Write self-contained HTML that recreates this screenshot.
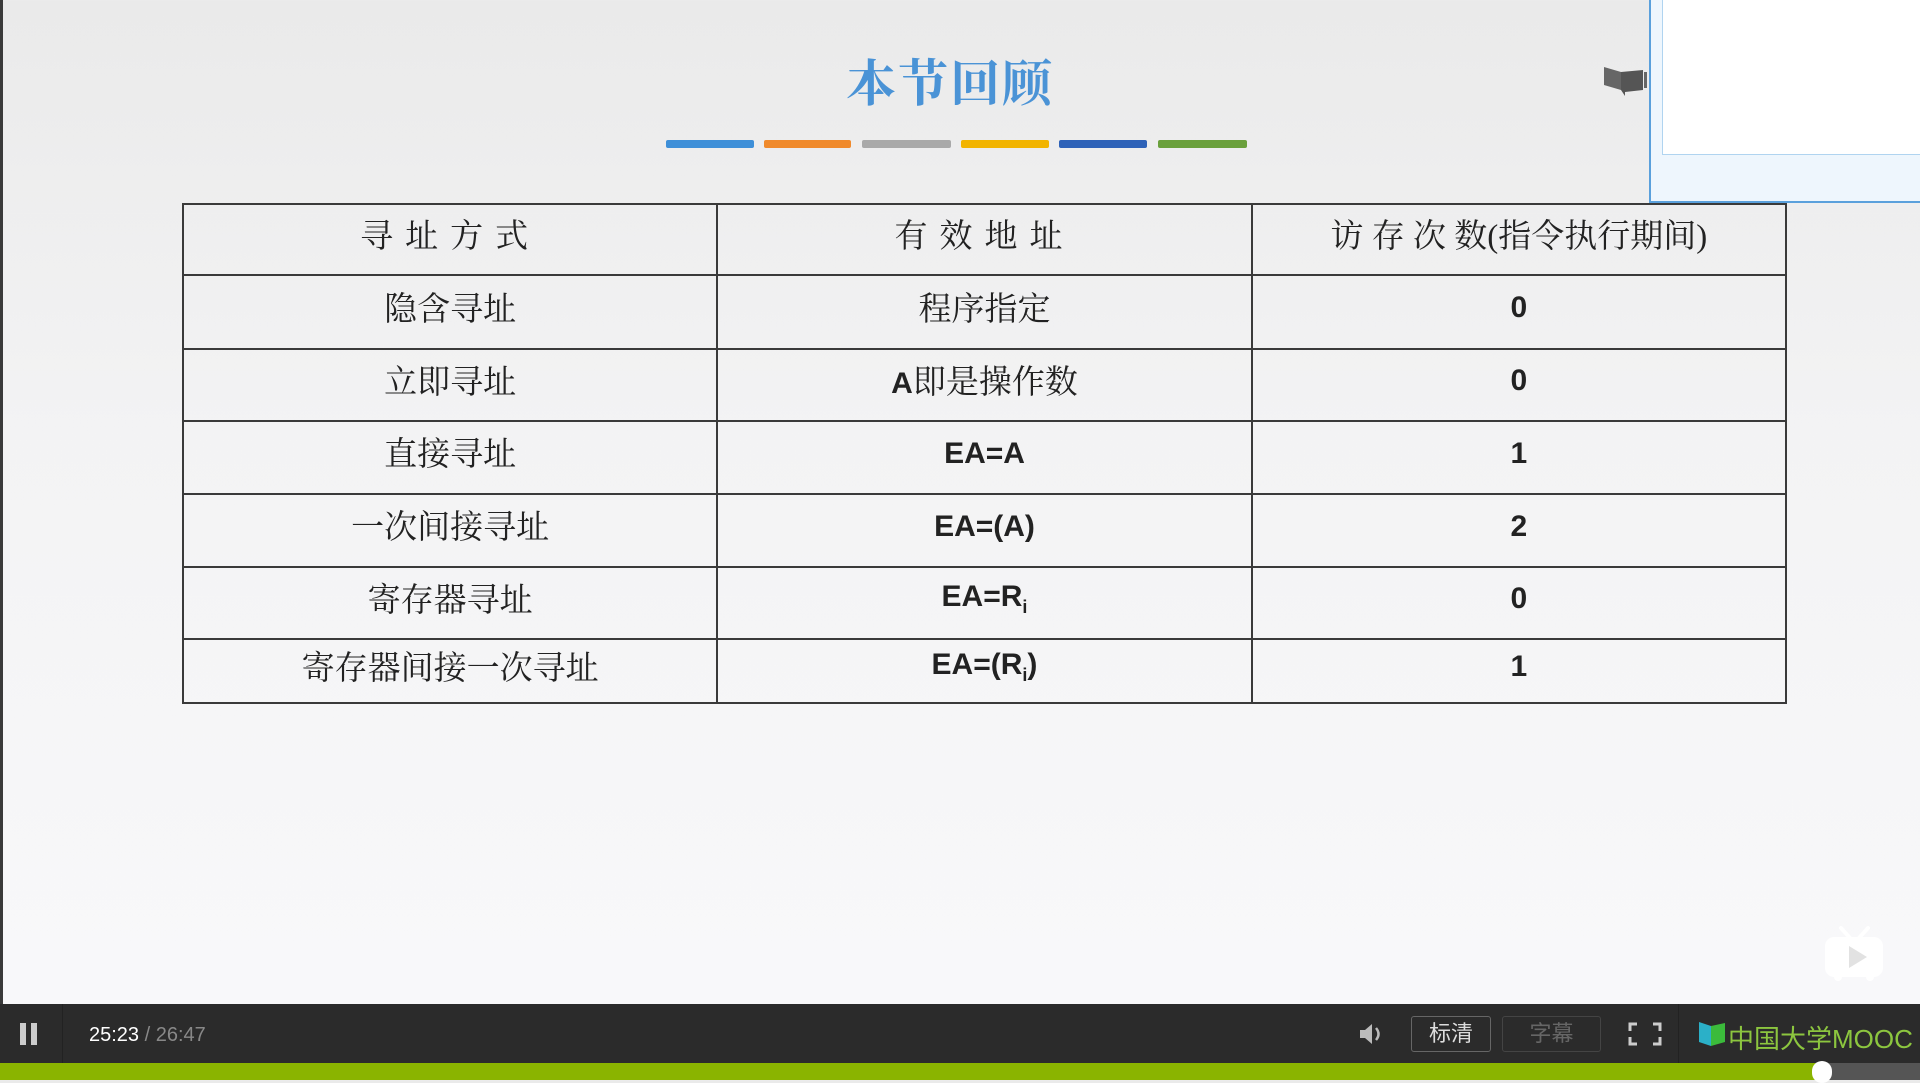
<!DOCTYPE html>
<html><head><meta charset="utf-8"><style>
*{margin:0;padding:0;box-sizing:border-box}
body{width:1920px;height:1080px;overflow:hidden;position:relative;background:linear-gradient(#eaeaea 0%,#f3f3f4 40%,#f9f9fb 100%);font-family:"Liberation Serif","Noto Serif CJK SC",serif}
.leftb{position:absolute;left:0;top:0;width:3px;height:1004px;background:#3a3a3a}
.title{position:absolute;left:0;width:1900px;top:44px;text-align:center;font-size:50px;color:#4a93d6;font-weight:bold;font-family:"Liberation Serif","Noto Serif CJK SC",serif;letter-spacing:2px}
.bar{position:absolute;top:140px;height:8px;border-radius:2px}
table{position:absolute;left:182px;top:203px;width:1605px;height:499px;border-collapse:collapse}
td{border:2.5px solid #3a3a3a;text-align:center;font-size:33px;color:#222;width:535px;padding-bottom:12px;font-weight:normal}
.s{font-family:"Liberation Sans","Noto Sans CJK SC",sans-serif;font-size:30px;color:#222;font-weight:bold;padding-bottom:8px}
.pop{position:absolute;left:1649px;top:0;width:271px;height:203px;background:#eef6fd;border-left:2px solid #5aa0dc;border-bottom:2px solid #5aa0dc}
.pop div{position:absolute;left:11px;top:0;right:0;height:155px;background:#fff;border-left:1px solid #b0d4f0;border-bottom:1px solid #b0d4f0}
.ctrl{position:absolute;left:0;top:1004px;width:1920px;height:59px;background:#2b2b2b;color:#ddd;font-family:"Liberation Sans","Noto Sans CJK SC",sans-serif}
.prog{position:absolute;left:0;top:1063px;width:1920px;height:17px;background:#8ab400}
.prog span{position:absolute;left:1822px;top:0;width:98px;height:17px;background:#555}
.knob{position:absolute;left:1812px;top:1061px;width:20px;height:22px;border-radius:10px;background:#fff}
.btn{position:absolute;top:12px;height:36px;border:1.5px solid #555;border-radius:3px;font-size:22px;text-align:center;line-height:34px}
</style></head><body>
<div class="leftb"></div>
<div class="title">本节回顾</div>
<div class="bar" style="left:666px;width:88px;background:#3e8fd8"></div>
<div class="bar" style="left:764px;width:87px;background:#f08a2c"></div>
<div class="bar" style="left:862px;width:89px;background:#a9a9a9"></div>
<div class="bar" style="left:961px;width:88px;background:#f2b400"></div>
<div class="bar" style="left:1059px;width:88px;background:#2e62b8"></div>
<div class="bar" style="left:1158px;width:89px;background:#6aa03c"></div>
<table>
<tr style="height:71px"><td style="letter-spacing:12px">寻址方式</td><td style="letter-spacing:12px">有效地址</td><td>访 存 次 数(指令执行期间)</td></tr>
<tr style="height:74px"><td>隐含寻址</td><td>程序指定</td><td class="s">0</td></tr>
<tr style="height:72px"><td>立即寻址</td><td><span class="s" style="padding:0">A</span>即是操作数</td><td class="s">0</td></tr>
<tr style="height:73px"><td>直接寻址</td><td class="s">EA=A</td><td class="s">1</td></tr>
<tr style="height:73px"><td>一次间接寻址</td><td class="s">EA=(A)</td><td class="s">2</td></tr>
<tr style="height:72px"><td>寄存器寻址</td><td class="s">EA=R<sub style="font-size:18px">i</sub></td><td class="s">0</td></tr>
<tr style="height:64px"><td>寄存器间接一次寻址</td><td class="s">EA=(R<sub style="font-size:18px">i</sub>)</td><td class="s">1</td></tr>
</table>
<svg style="position:absolute;left:1603px;top:64px" width="44" height="34"><path d="M1 3 L18 8 L18 26 L1 21Z" fill="#666"/><path d="M18 8 L40 6 L40 26 L22 28 L22 32 L18 26Z" fill="#555"/><rect x="41" y="8" width="3" height="16" fill="#666"/></svg>
<div class="pop"><div></div></div>
<svg style="position:absolute;left:1823px;top:925px" width="62" height="58"><path d="M18 3 L27 13 M45 3 L36 13" stroke="#fff" stroke-width="4" stroke-linecap="round"/><rect x="2" y="12" width="58" height="40" rx="9" fill="#fff"/><circle cx="15" cy="52" r="4" fill="#fff"/><circle cx="47" cy="52" r="4" fill="#fff"/><path d="M26 21 L26 43 L44 32Z" fill="#e2e2e2"/></svg>
<div class="ctrl">
<div style="position:absolute;left:20px;top:19px;width:6px;height:22px;background:#ccc"></div>
<div style="position:absolute;left:31px;top:19px;width:6px;height:22px;background:#ccc"></div>
<div style="position:absolute;left:62px;top:0;width:1px;height:59px;background:#222"></div>
<div style="position:absolute;left:89px;top:20px;font-size:20px;color:#fff">25:23 <span style="color:#888">/ 26:47</span></div>
<svg style="position:absolute;left:1358px;top:18px" width="28" height="24"><path d="M2 8 H7 L14 2 V22 L7 16 H2Z" fill="#bbb"/><path d="M18 6 Q23 12 18 18" stroke="#bbb" stroke-width="2.5" fill="none"/></svg>
<div class="btn" style="left:1411px;width:80px;color:#ddd;border-color:#666">标清</div>
<div class="btn" style="left:1502px;width:99px;color:#666;border-color:#444">字幕</div>
<svg style="position:absolute;left:1628px;top:18px" width="34" height="24"><path d="M2 9 V2 H9 M25 2 H32 V9 M32 15 V22 H25 M9 22 H2 V15" stroke="#ccc" stroke-width="3" fill="none"/></svg>
<div style="position:absolute;left:1678px;top:0;width:1px;height:59px;background:#222"></div>
<svg style="position:absolute;left:1697px;top:16px" width="30" height="30"><path d="M2 2 L14 6 L14 26 L2 22Z" fill="#2bb0c8"/><path d="M14 6 L28 3 L28 22 L14 26Z" fill="#3bbb3b"/></svg>
<div style="position:absolute;left:1728px;top:15px;font-size:26px;color:#8cc63f;white-space:nowrap">中国大学MOOC</div>
</div>
<div class="prog"><span></span></div>
<div class="knob"></div>
</body></html>
